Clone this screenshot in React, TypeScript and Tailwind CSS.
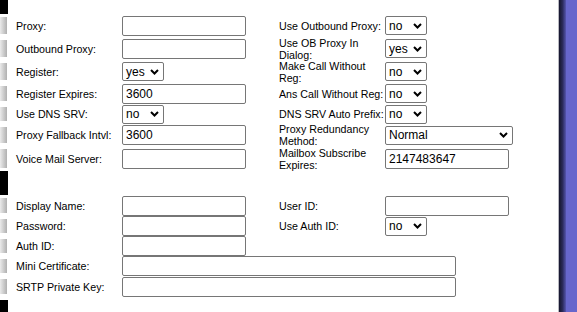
import React from "react";

const Chevron = () => (
  <svg width="9" height="6" viewBox="0 0 9 6" className="shrink-0">
    <path d="M1 1 L4.5 4.5 L8 1" fill="none" stroke="#000" strokeWidth="2" />
  </svg>
);

const Input = ({ value = "", w = "w-[124px]" }: { value?: string; w?: string }) => (
  <div
    className={`${w} h-[20px] border border-[#767676] rounded-[2px] bg-white flex items-center pl-[3px] text-[12px] text-black leading-none`}
  >
    {value}
  </div>
);

const Select = ({ value, w = "w-[42px]" }: { value: string; w?: string }) => (
  <div
    className={`${w} h-[19px] border border-[#767676] rounded-[2px] bg-white flex items-center justify-between pl-[3px] pr-[4px] text-[12px] text-black leading-none`}
  >
    <span>{value}</span>
    <Chevron />
  </div>
);

const Gutter = ({ kind }: { kind: "gray" | "black" | "white" }) => (
  <div className="w-[8px] self-stretch flex flex-col">
    {kind === "black" && <div className="flex-1 bg-black" />}
    {kind === "gray" && (
      <div className="flex-1 my-[3px] w-[7px] bg-gradient-to-r from-[#ebebeb] to-[#b0b0b0]" />
    )}
  </div>
);

type RowProps = {
  h: string;
  label?: React.ReactNode;
  control?: React.ReactNode;
  rlabel?: React.ReactNode;
  rcontrol?: React.ReactNode;
  wide?: boolean;
};

const Row = ({ h, label, control, rlabel, rcontrol, wide }: RowProps) => (
  <div className={`flex ${h}`}>
    <Gutter kind="gray" />
    <div className="w-[8px]" />
    <div className="w-[106px] flex items-center leading-[12px]">{label}</div>
    {wide ? (
      <div className="flex-1 flex items-center">{control}</div>
    ) : (
      <>
        <div className="w-[157px] flex items-center">{control}</div>
        <div className="w-[106px] flex items-center leading-[12px]">{rlabel}</div>
        <div className="flex-1 flex items-center">{rcontrol}</div>
      </>
    )}
  </div>
);

export default function App() {
  return (
    <div
      className="w-[577px] h-[312px] flex bg-white text-black overflow-hidden"
      style={{ fontFamily: '"Liberation Sans", Arial, sans-serif', fontSize: "10.67px" }}
    >
      <div className="w-[558px] flex flex-col">
        <div className="flex h-[14px]">
          <Gutter kind="black" />
        </div>
        <Row h="h-[23px]" label="Proxy:" control={<Input />} rlabel="Use Outbound Proxy:" rcontrol={<Select value="no" />} />
        <Row h="h-[23px]" label="Outbound Proxy:" control={<Input />} rlabel={<span>Use OB Proxy In<br />Dialog:</span>} rcontrol={<Select value="yes" />} />
        <Row h="h-[23px]" label="Register:" control={<Select value="yes" />} rlabel={<span>Make Call Without<br />Reg:</span>} rcontrol={<Select value="no" />} />
        <Row h="h-[21px]" label="Register Expires:" control={<Input value="3600" />} rlabel={<span className="whitespace-nowrap">Ans Call Without Reg:</span>} rcontrol={<Select value="no" />} />
        <Row h="h-[20px]" label="Use DNS SRV:" control={<Select value="no" />} rlabel={<span className="whitespace-nowrap">DNS SRV Auto Prefix:</span>} rcontrol={<Select value="no" />} />
        <Row h="h-[22px]" label="Proxy Fallback Intvl:" control={<Input value="3600" />} rlabel={<span>Proxy Redundancy<br />Method:</span>} rcontrol={<Select value="Normal" w="w-[128px]" />} />
        <Row h="h-[25px]" label="Voice Mail Server:" control={<Input />} rlabel={<span>Mailbox Subscribe<br />Expires:</span>} rcontrol={<Input value="2147483647" />} />
        <div className="flex h-[24px]">
          <Gutter kind="black" />
        </div>
        <Row h="h-[21px]" label="Display Name:" control={<Input />} rlabel="User ID:" rcontrol={<Input />} />
        <Row h="h-[20px]" label="Password:" control={<Input />} rlabel="Use Auth ID:" rcontrol={<Select value="no" />} />
        <Row h="h-[20px]" label="Auth ID:" control={<Input />} />
        <Row h="h-[20px]" wide label="Mini Certificate:" control={<Input w="w-[334px]" />} />
        <Row h="h-[21px]" wide label="SRTP Private Key:" control={<Input w="w-[334px]" />} />
        <div className="flex h-[3px]" />
        <div className="flex flex-1">
          <Gutter kind="black" />
        </div>
      </div>
      <div className="w-[1px] bg-[#b8b8c0]" />
      <div className="w-[7px] bg-gradient-to-r from-[#16162c] via-[#2a2a5a] to-[#5656b0]" />
      <div className="flex-1 bg-[#6766cc]" />
    </div>
  );
}
